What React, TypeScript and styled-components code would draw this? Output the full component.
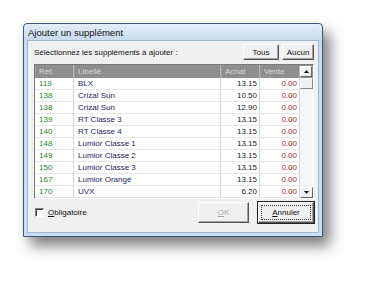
import React from 'react'
import styled, { createGlobalStyle } from 'styled-components'

const GlobalStyle = createGlobalStyle`
  html, body {
    margin: 0;
    background: #fff;
  }
  body {
    font-family: "Liberation Sans", Arial, sans-serif;
  }
`

const Page = styled.div`
  width: 368px;
  height: 281px;
  padding: 23px 0 0 23px;
  box-sizing: border-box;
`

const Window = styled.div`
  width: 300px;
  height: 214px;
  box-sizing: border-box;
  display: flex;
  flex-direction: column;
  padding: 0 3px 3px;
  border: 1px solid #3d5675;
  border-radius: 4px 4px 0 0;
  background: linear-gradient(#e3edf8, #c9dbf0 16px, #cadcf0);
  box-shadow: 7px 9px 14px rgba(0, 0, 0, 0.5);
`

const TitleBar = styled.div`
  height: 16px;
  display: flex;
  align-items: center;
  padding-left: 1px;
  font-size: 9.5px;
  color: #101010;
`

const Body = styled.div`
  flex: 1;
  display: flex;
  flex-direction: column;
  padding: 3px 4px 0 6px;
  background: #f0f0f0;
  border: 1px solid #a3b6cd;
`

const TopRow = styled.div`
  width: 280px;
  height: 16px;
  display: flex;
  align-items: center;
  gap: 3px;
  font-size: 8px;
  color: #111;

  span {
    flex: 1;
  }
`

const Button = styled.div<{ $w: number; $def?: boolean; $off?: boolean }>`
  width: ${(p) => p.$w}px;
  height: 100%;
  box-sizing: border-box;
  display: flex;
  align-items: center;
  justify-content: center;
  font-size: 8px;
  background: #f0f0f0;
  color: ${(p) => (p.$off ? '#a0a0a0' : '#111')};
  text-shadow: ${(p) => (p.$off ? '1px 1px 0 #fff' : 'none')};
  border: 1px solid;
  border-color: #fff #555 #555 #fff;
  box-shadow: inset -1px -1px 0 #a0a0a0;
  outline: ${(p) => (p.$def ? '1px solid #222' : 'none')};
  outline-offset: 0;
  position: relative;

  u {
    text-decoration-thickness: 1px;
  }
`

const Focus = styled.span`
  position: absolute;
  inset: 2px;
  border: 1px dotted #333;
`

const ListBox = styled.div`
  width: 280px;
  margin-top: 4px;
  display: flex;
  box-sizing: border-box;
  border: 1px solid;
  border-color: #7a7a7a #fff #fff #7a7a7a;
  background: #fff;
`

const Table = styled.div`
  flex: 1;
  display: grid;
  grid-template-columns: 39px 147px 39px 40px;
  grid-auto-rows: 12px;
  grid-template-rows: 13px;
`

const Head = styled.div`
  background: #8e8e8e;
  color: #d6d6d6;
  font-size: 8px;
  display: flex;
  align-items: center;
  padding-left: 3px;
  border-right: 1px solid #b4b4b4;
  border-left: 1px solid #9c9c9c;
`

const Cell = styled.div<{ $c: string; $right?: boolean }>`
  font-size: 8px;
  color: ${(p) => p.$c};
  display: flex;
  align-items: center;
  justify-content: ${(p) => (p.$right ? 'flex-end' : 'flex-start')};
  padding: 0 2px 0 4px;
  border-bottom: 1px solid #e6e6e6;
  border-right: 1px solid #d4d4d4;
  white-space: nowrap;
`

const ScrollBar = styled.div`
  width: 13px;
  display: flex;
  flex-direction: column;
  background: #f6f6f6;
`

const ArrowCap = styled.div`
  height: 13px;
  background: #8e8e8e;
  display: flex;
  align-items: center;
  justify-content: center;
  padding: 1px 1px 1px 0;
  box-sizing: border-box;
`

const Arrow = styled.div`
  width: 100%;
  height: 100%;
  box-sizing: border-box;
  display: flex;
  align-items: center;
  justify-content: center;
  background: #f0f0f0;
  border: 1px solid;
  border-color: #fff #666 #666 #fff;
`

const DownArrow = styled(Arrow)`
  height: 11px;
`

const Thumb = styled.div`
  height: 11px;
  box-sizing: border-box;
  background: #f0f0f0;
  border: 1px solid;
  border-color: #fff #888 #888 #fff;
`

const Track = styled.div`
  flex: 1;
`

const Bottom = styled.div`
  width: 280px;
  height: 21px;
  margin-top: 3px;
  display: flex;
  align-items: center;
  gap: 9px;
`

const Check = styled.label`
  flex: 1;
  display: flex;
  align-items: center;
  gap: 4px;
  padding-left: 1px;
  font-size: 8px;
  color: #111;
`

const Box = styled.span`
  width: 9px;
  height: 9px;
  box-sizing: border-box;
  background: #fff;
  border: 1px solid;
  border-color: #808080 #fff #fff #808080;
  box-shadow: inset 1px 1px 0 #404040;
`

const Tri = ({ up }: { up?: boolean }) => (
  <svg width="5" height="3" viewBox="0 0 5 3">
    <path d={up ? 'M2.5 0 L5 3 L0 3 Z' : 'M0 0 L5 0 L2.5 3 Z'} fill="#000" />
  </svg>
)

const rows = [
  ['119', 'BLX', '13.15'],
  ['138', 'Crizal Sun', '10.50'],
  ['138', 'Crizal Sun', '12.90'],
  ['139', 'RT Classe 3', '13.15'],
  ['140', 'RT Classe 4', '13.15'],
  ['148', 'Lumior Classe 1', '13.15'],
  ['149', 'Lumior Classe 2', '13.15'],
  ['150', 'Lumior Classe 3', '13.15'],
  ['167', 'Lumior Orangé', '13.15'],
  ['170', 'UVX', '6.20'],
]

export default function App() {
  return (
    <Page>
      <GlobalStyle />
      <Window>
        <TitleBar>Ajouter un supplément</TitleBar>
        <Body>
          <TopRow>
            <span>Sélectionnez les suppléments à ajouter :</span>
            <Button $w={36}>Tous</Button>
            <Button $w={32}>Aucun</Button>
          </TopRow>
          <ListBox>
            <Table>
              <Head>Réf.</Head>
              <Head>Libellé</Head>
              <Head>Achat</Head>
              <Head>Vente</Head>
              {rows.map((r, i) => (
                <React.Fragment key={i}>
                  <Cell $c="#2d7d2d">{r[0]}</Cell>
                  <Cell $c="#24245e">{r[1]}</Cell>
                  <Cell $c="#1a1a1a" $right>
                    {r[2]}
                  </Cell>
                  <Cell $c="#8a2b2b" $right>
                    0.00
                  </Cell>
                </React.Fragment>
              ))}
            </Table>
            <ScrollBar>
              <ArrowCap>
                <Arrow>
                  <Tri up />
                </Arrow>
              </ArrowCap>
              <Thumb />
              <Track />
              <DownArrow>
                <Tri />
              </DownArrow>
            </ScrollBar>
          </ListBox>
          <Bottom>
            <Check>
              <Box />
              <span>
                <u>O</u>bligatoire
              </span>
            </Check>
            <Button $w={51} $off>
              <span>
                <u>O</u>K
              </span>
            </Button>
            <Button $w={56} $def>
              <Focus />
              <span>
                <u>A</u>nnuler
              </span>
            </Button>
          </Bottom>
        </Body>
      </Window>
    </Page>
  )
}
